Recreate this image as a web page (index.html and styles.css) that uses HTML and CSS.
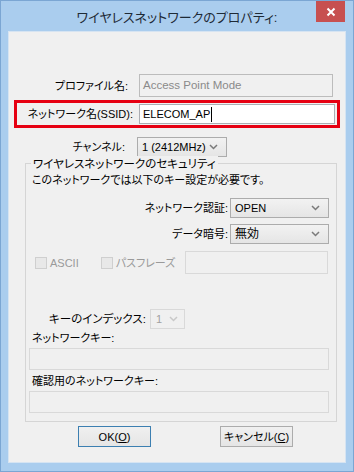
FILE: index.html
```html
<!DOCTYPE html>
<html lang="ja">
<head>
<meta charset="utf-8">
<link rel="stylesheet" href="styles.css">
</head>
<body>
<div class="window">
  <div class="titlebar">
    <span class="title">ワイヤレスネットワークのプロパティ:</span>
    <div class="close"><svg width="10" height="10" viewBox="0 0 10 10"><path d="M1.5 1.5 L8.5 8.5 M8.5 1.5 L1.5 8.5" stroke="#fff" stroke-width="2"/></svg></div>
  </div>
  <div class="client">
    <div class="row profile">
      <span class="lbl lbl-profile">プロファイル名:</span>
      <div class="field ro w-profile">Access Point Mode</div>
    </div>
    <div class="ssid-box">
      <span class="lbl lbl-ssid">ネットワーク名(SSID):</span>
      <div class="field white w-ssid">ELECOM_AP<span class="caret"></span></div>
    </div>
    <div class="row channel">
      <span class="lbl lbl-channel">チャンネル:</span>
      <div class="select w-channel"><span>1 (2412MHz)</span><svg class="chev" width="9" height="6" viewBox="0 0 9 6"><path d="M1 1 L4.5 4.5 L8 1" fill="none" stroke="#7a7a7a" stroke-width="1.5"/></svg></div>
    </div>
    <div class="group">
      <div class="legend">ワイヤレスネットワークのセキュリティ</div>
      <div class="text">このネットワークでは以下のキー設定が必要です。</div>
      <div class="grow auth">
        <span class="lbl">ネットワーク認証:</span>
        <div class="select w-sec"><span>OPEN</span><svg class="chev" width="9" height="6" viewBox="0 0 9 6"><path d="M1 1 L4.5 4.5 L8 1" fill="none" stroke="#7a7a7a" stroke-width="1.5"/></svg></div>
      </div>
      <div class="grow enc">
        <span class="lbl">データ暗号:</span>
        <div class="select w-sec"><span class="cjk">無効</span><svg class="chev" width="9" height="6" viewBox="0 0 9 6"><path d="M1 1 L4.5 4.5 L8 1" fill="none" stroke="#7a7a7a" stroke-width="1.5"/></svg></div>
      </div>
      <div class="checks">
        <span class="cb"></span><span class="dis">ASCII</span>
        <span class="cb cb2"></span><span class="dis">パスフレーズ</span>
        <div class="field dbox w-pass"></div>
      </div>
      <div class="keyidx">
        <span class="lbl">キーのインデックス:</span>
        <div class="select dsel"><span>1</span><svg class="chev" width="9" height="6" viewBox="0 0 9 6"><path d="M1 1 L4.5 4.5 L8 1" fill="none" stroke="#c8c8c8" stroke-width="1.5"/></svg></div>
      </div>
      <div class="text t-key">ネットワークキー:</div>
      <div class="field dbox w-key"></div>
      <div class="text t-key2">確認用のネットワークキー:</div>
      <div class="field dbox w-key"></div>
    </div>
    <div class="buttons">
      <div class="btn ok">OK(<u>O</u>)</div>
      <div class="btn">キャンセル(<u>C</u>)</div>
    </div>
  </div>
</div>
</body>
</html>
```
FILE: styles.css
```css
* { box-sizing: border-box; }
html, body { margin: 0; padding: 0; }
body {
  width: 354px; height: 472px;
  font-family: "Liberation Sans", "Noto Sans CJK JP", sans-serif;
  font-feature-settings: "palt";
  font-size: 11px;
  color: #000;
  white-space: nowrap;
}
.window {
  width: 354px; height: 472px;
  background: #aacdee;
  border: 1px solid #7ba6d3;
  position: relative;
  padding: 0 7px 8px 7px;
  display: flex; flex-direction: column;
}
.titlebar {
  height: 30px;
  display: flex; align-items: center; justify-content: center;
  padding-top: 1px;
}
.title {
  font-size: 13px;
  color: #1e2a36;
}
.close {
  position: absolute;
  top: 0; right: 8px;
  width: 29px; height: 21px;
  background: #c75050;
  display: flex; align-items: center; justify-content: center;
}
.client {
  width: 338px; height: 432px;
  background: #f0f0f0;
  border: 1px solid #d6e4f2;
  display: flex; flex-direction: column;
}
.row { display: flex; align-items: center; }
.lbl { text-align: right; white-space: nowrap; line-height: 16px; }
.profile { margin-top: 42px; height: 23px; }
.lbl-profile { width: 119px; margin-right: 11px; }
.field {
  border: 1px solid #c2c2c2;
  height: 23px;
  display: flex; align-items: center;
  padding-left: 3px;
  line-height: 16px;
}
.ro { color: #8a8a8a; background: #f0f0f0; border-color: #bcbcbc; padding-bottom: 2px; font-size: 11.5px; }
.w-profile { width: 194px; }
.ssid-box {
  margin-top: 3px; margin-left: 5px;
  width: 326px; height: 28px;
  border: 3px solid #e60012;
  display: flex; align-items: center;
}
.lbl-ssid { width: 116px; margin-right: 6px; }
.white { background: #fff; border-color: #abadb3; }
.w-ssid { width: 196px; height: 20px; color: #000; }
.caret { display: inline-block; width: 1px; height: 15px; background: #000; margin-left: 1px; }
.channel { margin-top: 9px; height: 20px; }
.lbl-channel { width: 116px; margin-right: 12px; }
.select {
  height: 20px;
  border: 1px solid #acacac;
  background: linear-gradient(#f2f2f2, #e5e5e5);
  display: flex; align-items: center; justify-content: space-between;
  padding: 0 8px 0 4px;
  line-height: 16px;
  color: #000;
}
.w-channel { width: 90px; }
.group {
  margin-top: 6px; margin-left: 16px;
  width: 312px; height: 259px;
  border: 1px solid #d5d5d5;
  display: flex; flex-direction: column;
}
.legend {
  margin-top: -8px; margin-left: 5px;
  padding: 0 2px;
  width: fit-content;
  background: #f0f0f0;
  line-height: 16px;
  font-size: 11.5px;
}
.text { line-height: 16px; margin-left: 6px; }
.grow { display: flex; align-items: center; justify-content: flex-end; padding-right: 7px; height: 20px; }
.grow .lbl { margin-right: 2px; }
.auth { margin-top: 10px; }
.enc { margin-top: 6px; }
.w-sec { width: 99px; }
.cjk { font-size: 12px; }
.checks {
  margin-top: 7px; height: 23px;
  display: flex; align-items: center;
  padding-left: 9px; padding-right: 8px;
}
.cb {
  width: 12px; height: 12px;
  border: 1px solid #cfcfcf;
  background: #e8e8e8;
  margin-right: 3px;
}
.cb2 { margin-left: 22px; }
.dis { color: #9a9a9a; line-height: 16px; }
.dbox { background: #f0f0f0; border-color: #d9d9d9; }
.w-pass { width: 143px; margin-left: auto; }
.keyidx {
  margin-top: 35px; height: 20px;
  display: flex; align-items: center;
  padding-left: 23px;
}
.keyidx .lbl { margin-right: 4px; font-size: 11.5px; }
.dsel {
  width: 35px;
  border-color: #d9d9d9;
  background: #f0f0f0;
  color: #a0a0a0;
  padding: 0 6px 0 5px;
}
.t-key { margin-top: 1px; }
.w-key { width: 300px; height: 22px; margin-left: 3px; margin-top: 2px; }
.t-key2 { margin-top: 3px; }
.buttons {
  margin-top: 4px; margin-left: 69px;
  display: flex; gap: 69px;
}
.btn {
  width: 73px; height: 21px;
  border: 1px solid #acacac;
  background: linear-gradient(#f0f0f0, #e5e5e5);
  display: flex; align-items: center; justify-content: center;
  color: #000;
  line-height: 16px;
}
.ok { border-color: #3c7fb1; }
u { text-decoration: underline; text-underline-offset: 1px; }
```
